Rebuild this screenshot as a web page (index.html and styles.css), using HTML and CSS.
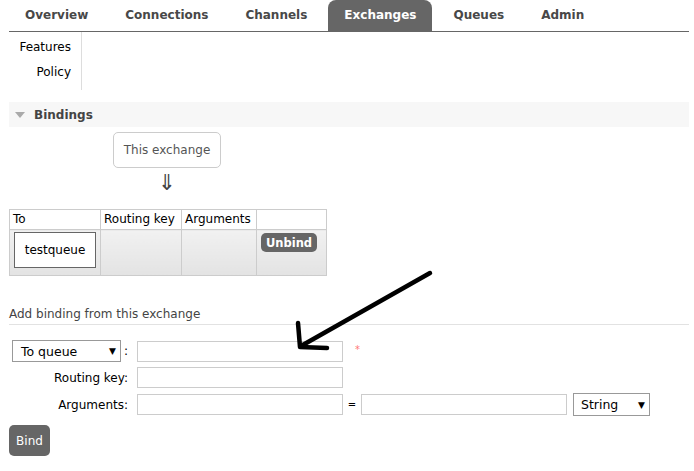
FILE: index.html
```
<!DOCTYPE html>
<html>
<head>
<meta charset="utf-8">
<link rel="stylesheet" href="styles.css">
</head>
<body>
<nav class="tabs">
  <a class="tab">Overview</a>
  <a class="tab">Connections</a>
  <a class="tab">Channels</a>
  <a class="tab active">Exchanges</a>
  <a class="tab">Queues</a>
  <a class="tab">Admin</a>
</nav>
<div class="sub">
  <ul class="sub-list">
    <li>Features</li>
    <li>Policy</li>
  </ul>
</div>
<section class="section">
  <h2 class="section-head"><span class="tri"></span>Bindings</h2>
  <div class="section-body">
    <div class="this-ex">This exchange</div>
    <div class="down">&#8659;</div>
    <table class="bindings">
      <thead>
        <tr><th class="c1">To</th><th class="c2">Routing key</th><th class="c3">Arguments</th><th class="c4"></th></tr>
      </thead>
      <tbody>
        <tr>
          <td><div class="queue-box">testqueue</div></td>
          <td></td>
          <td></td>
          <td><button class="btn-small">Unbind</button></td>
        </tr>
      </tbody>
    </table>
    <h3 class="sub-head">Add binding from this exchange</h3>
    <form class="form">
      <div class="row">
        <div class="label"><div class="select sel-dest"><span>To queue</span><span class="caret">&#9660;</span></div><span class="colon">:</span></div>
        <input class="field" type="text">
        <span class="req">*</span>
      </div>
      <div class="row">
        <div class="label">Routing key:</div>
        <input class="field" type="text">
      </div>
      <div class="row">
        <div class="label">Arguments:</div>
        <input class="field" type="text">
        <span class="eq">=</span>
        <input class="field" type="text">
        <div class="select sel-type"><span>String</span><span class="caret">&#9660;</span></div>
      </div>
      <button class="btn" type="button">Bind</button>
    </form>
  </div>
</section>
<svg class="scribble" width="694" height="471" viewBox="0 0 694 471">
  <path d="M430 273 L301 346" />
  <path d="M298 323 L300 347 L327 348" />
</svg>
</body>
</html>
```
FILE: styles.css
```
html, body {
  margin: 0;
  padding: 0;
  background: #fff;
}
body {
  font-family: "DejaVu Sans", Verdana, sans-serif;
  font-size: 12px;
  color: #000;
  position: relative;
  width: 694px;
  height: 471px;
  overflow: hidden;
}
.tabs {
  display: flex;
  gap: 5px;
  margin: 0 5px 0 9px;
  height: 31px;
  border-bottom: 1px solid #666;
}
.tab {
  display: block;
  padding: 0 16px;
  line-height: 31px;
  font-weight: bold;
  color: #484848;
}
.tab.active {
  background: #666;
  color: #fff;
  border-radius: 8px 8px 0 0;
}
.sub {
  margin-left: 9px;
  display: flex;
}
.sub-list {
  list-style: none;
  margin: 0;
  width: 62px;
  padding: 3px 10px 5px 0;
  border-right: 1px solid #ddd;
  text-align: right;
}
.sub-list li {
  line-height: 25px;
}
.section {
  margin: 12px 5px 0 9px;
}
.section-head {
  margin: 0;
  height: 25px;
  background: #f7f7f7;
  display: flex;
  align-items: center;
  font-size: 12px;
  font-weight: bold;
  color: #444;
}
.tri {
  width: 0;
  height: 0;
  margin: 1px 9px 0 6px;
  border-left: 5px solid transparent;
  border-right: 5px solid transparent;
  border-top: 6px solid #aaa;
}
.this-ex {
  margin: 5px 0 0 104px;
  width: 108px;
  height: 36px;
  box-sizing: border-box;
  border: 1px solid #ccc;
  border-radius: 5px;
  display: flex;
  align-items: center;
  justify-content: center;
  color: #555;
}
.down {
  margin-left: 104px;
  width: 108px;
  text-align: center;
  font-size: 22px;
  line-height: 24px;
  padding-top: 3px;
  height: 24px;
  margin-bottom: 14px;
  color: #444;
}
.bindings {
  border-collapse: collapse;
}
.bindings th, .bindings td {
  border: 1px solid #ccc;
  text-align: left;
  vertical-align: top;
  padding: 0;
}
.bindings th {
  font-weight: normal;
  height: 19px;
  line-height: 19px;
  padding: 0 0 0 3px;
}
.c1 { width: 87px; }
.c2 { width: 77px; }
.c3 { width: 71px; }
.c4 { width: 66px; }
.bindings tbody td {
  height: 45px;
  background: linear-gradient(#f1f1f1, #e3e3e3);
}
.queue-box {
  margin: 2px 0 0 4px;
  width: 82px;
  height: 36px;
  box-sizing: border-box;
  border: 1px solid #666;
  background: #fff;
  display: flex;
  align-items: center;
  justify-content: center;
}
.btn-small {
  margin: 3px 0 0 4px;
  width: 56px;
  height: 19px;
  padding: 0;
  border: 0;
  border-radius: 5px;
  background: #666;
  color: #fff;
  font-family: inherit;
  font-size: 11.5px;
  font-weight: bold;
}
.sub-head {
  margin: 29px 0 0 0;
  height: 19px;
  line-height: 19px;
  border-bottom: 1px solid #e2e2e2;
  font-size: 12px;
  font-weight: normal;
  color: #444;
}
.form {
  margin: 15px 0 0 0;
}
.row {
  display: flex;
  align-items: center;
  margin-bottom: 5px;
}
.label {
  width: 119px;
  display: flex;
  justify-content: flex-end;
  align-items: center;
}
.colon {
  margin-left: 3px;
}
.select {
  box-sizing: border-box;
  display: flex;
  align-items: center;
  justify-content: space-between;
  border: 1px solid #999;
  background: #fff;
  padding: 0 4px 0 8px;
  font-size: 12.5px;
}
.sel-dest {
  width: 109px;
  height: 22px;
}
.sel-type {
  width: 77px;
  height: 23px;
  margin-left: 6px;
  padding-left: 7px;
}
.caret {
  font-size: 9px;
}
.field {
  margin: 0 0 0 9px;
  width: 206px;
  height: 21px;
  box-sizing: border-box;
  border: 1px solid #ccc;
  padding: 0;
  background: #fff;
}
.eq {
  width: 18px;
  text-align: center;
  font-size: 10px;
}
.eq + .field {
  margin-left: 0;
}
.req {
  margin: 0 0 4px 12px;
  color: #f77;
  font-size: 10px;
}
.btn {
  margin-top: 4px;
  width: 41px;
  height: 31px;
  padding: 0;
  border: 0;
  border-radius: 5px;
  background: #666;
  color: #fff;
  font-family: inherit;
  font-size: 12px;
}
.scribble {
  position: absolute;
  left: 0;
  top: 0;
  pointer-events: none;
}
.scribble path {
  fill: none;
  stroke: #000;
  stroke-width: 4.5;
  stroke-linecap: round;
  stroke-linejoin: round;
}
```
